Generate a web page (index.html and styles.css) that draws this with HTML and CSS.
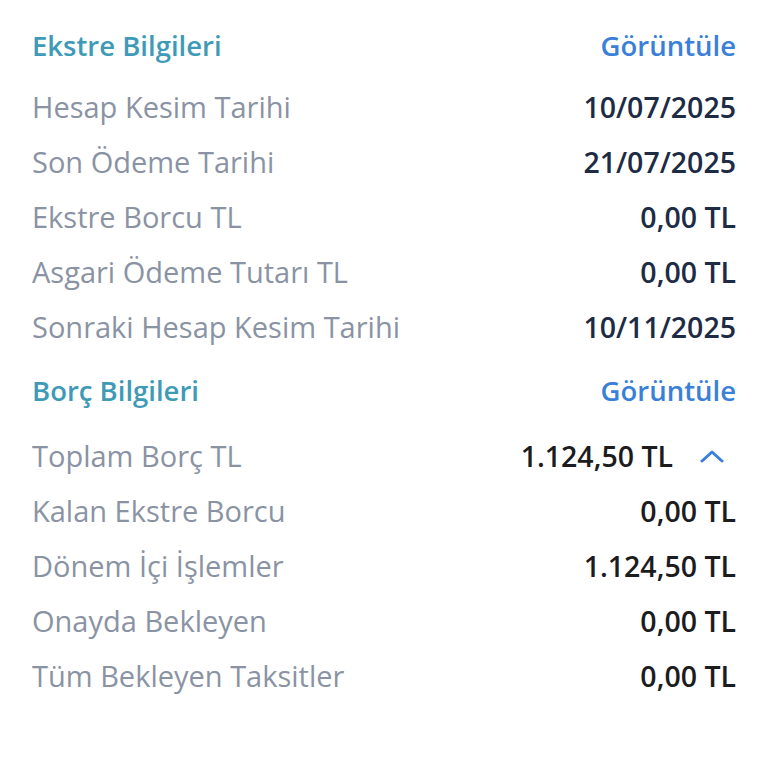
FILE: index.html
```html
<!DOCTYPE html>
<html lang="tr">

<head>
    <meta charset="UTF-8">
    <meta name="viewport" content="width=device-width, initial-scale=1.0">
    <title>Kart Bilgileri</title>
    <link rel="stylesheet" href="styles.css">
</head>

<body>
    <div class="panel">
        <div class="section">
            <div class="section-head">
                <span class="section-title">Ekstre Bilgileri</span>
                <a class="view-link" href="#">Görüntüle</a>
            </div>
            <div class="row"><span class="label">Hesap Kesim Tarihi</span><span class="value">10/07/2025</span></div>
            <div class="row"><span class="label">Son Ödeme Tarihi</span><span class="value">21/07/2025</span></div>
            <div class="row"><span class="label">Ekstre Borcu TL</span><span class="value">0,00 TL</span></div>
            <div class="row"><span class="label">Asgari Ödeme Tutarı TL</span><span class="value">0,00 TL</span></div>
            <div class="row"><span class="label">Sonraki Hesap Kesim Tarihi</span><span class="value">10/11/2025</span></div>
        </div>

        <div class="section debt">
            <div class="section-head">
                <span class="section-title">Borç Bilgileri</span>
                <a class="view-link" href="#">Görüntüle</a>
            </div>
            <div class="row total">
                <span class="label">Toplam Borç TL</span>
                <span class="value">1.124,50 TL
                    <svg class="chevron" width="24" height="14" viewBox="0 0 24 14">
                        <path d="M2 12 L12 3 L22 12" fill="none" stroke="#3a7fd8" stroke-width="3" stroke-linecap="round" stroke-linejoin="round" />
                    </svg>
                </span>
            </div>
            <div class="row"><span class="label">Kalan Ekstre Borcu</span><span class="value">0,00 TL</span></div>
            <div class="row"><span class="label">Dönem İçi İşlemler</span><span class="value">1.124,50 TL</span></div>
            <div class="row"><span class="label">Onayda Bekleyen</span><span class="value">0,00 TL</span></div>
            <div class="row"><span class="label">Tüm Bekleyen Taksitler</span><span class="value">0,00 TL</span></div>
        </div>
    </div>
</body>

</html>
```

FILE: styles.css
```css
body {
    margin: 0;
    background: #ffffff;
    font-family: "Open Sans", "Noto Sans", sans-serif;
}

.panel {
    padding: 26px 32px 0 32px;
}

.section-head {
    display: flex;
    justify-content: space-between;
    align-items: center;
    height: 38px;
    margin-bottom: 15px;
}

.section-title {
    font-size: 27.5px;
    font-weight: 600;
    color: #3e9ab6;
}

.view-link {
    font-size: 27.5px;
    font-weight: 600;
    color: #3a7fd8;
    text-decoration: none;
}

.row {
    display: flex;
    justify-content: space-between;
    align-items: center;
    height: 55px;
}

.label {
    font-size: 29px;
    color: #8a93a3;
}

.value {
    font-size: 28.5px;
    font-weight: 600;
    color: #1d2b45;
    display: flex;
    align-items: center;
}

.section.debt {
    margin-top: 17px;
}

.debt .value {
    color: #1c1c1e;
}

.debt .section-head {
    margin-bottom: 19px;
}

.chevron {
    margin-left: 27px;
    margin-right: 12px;
}
```
